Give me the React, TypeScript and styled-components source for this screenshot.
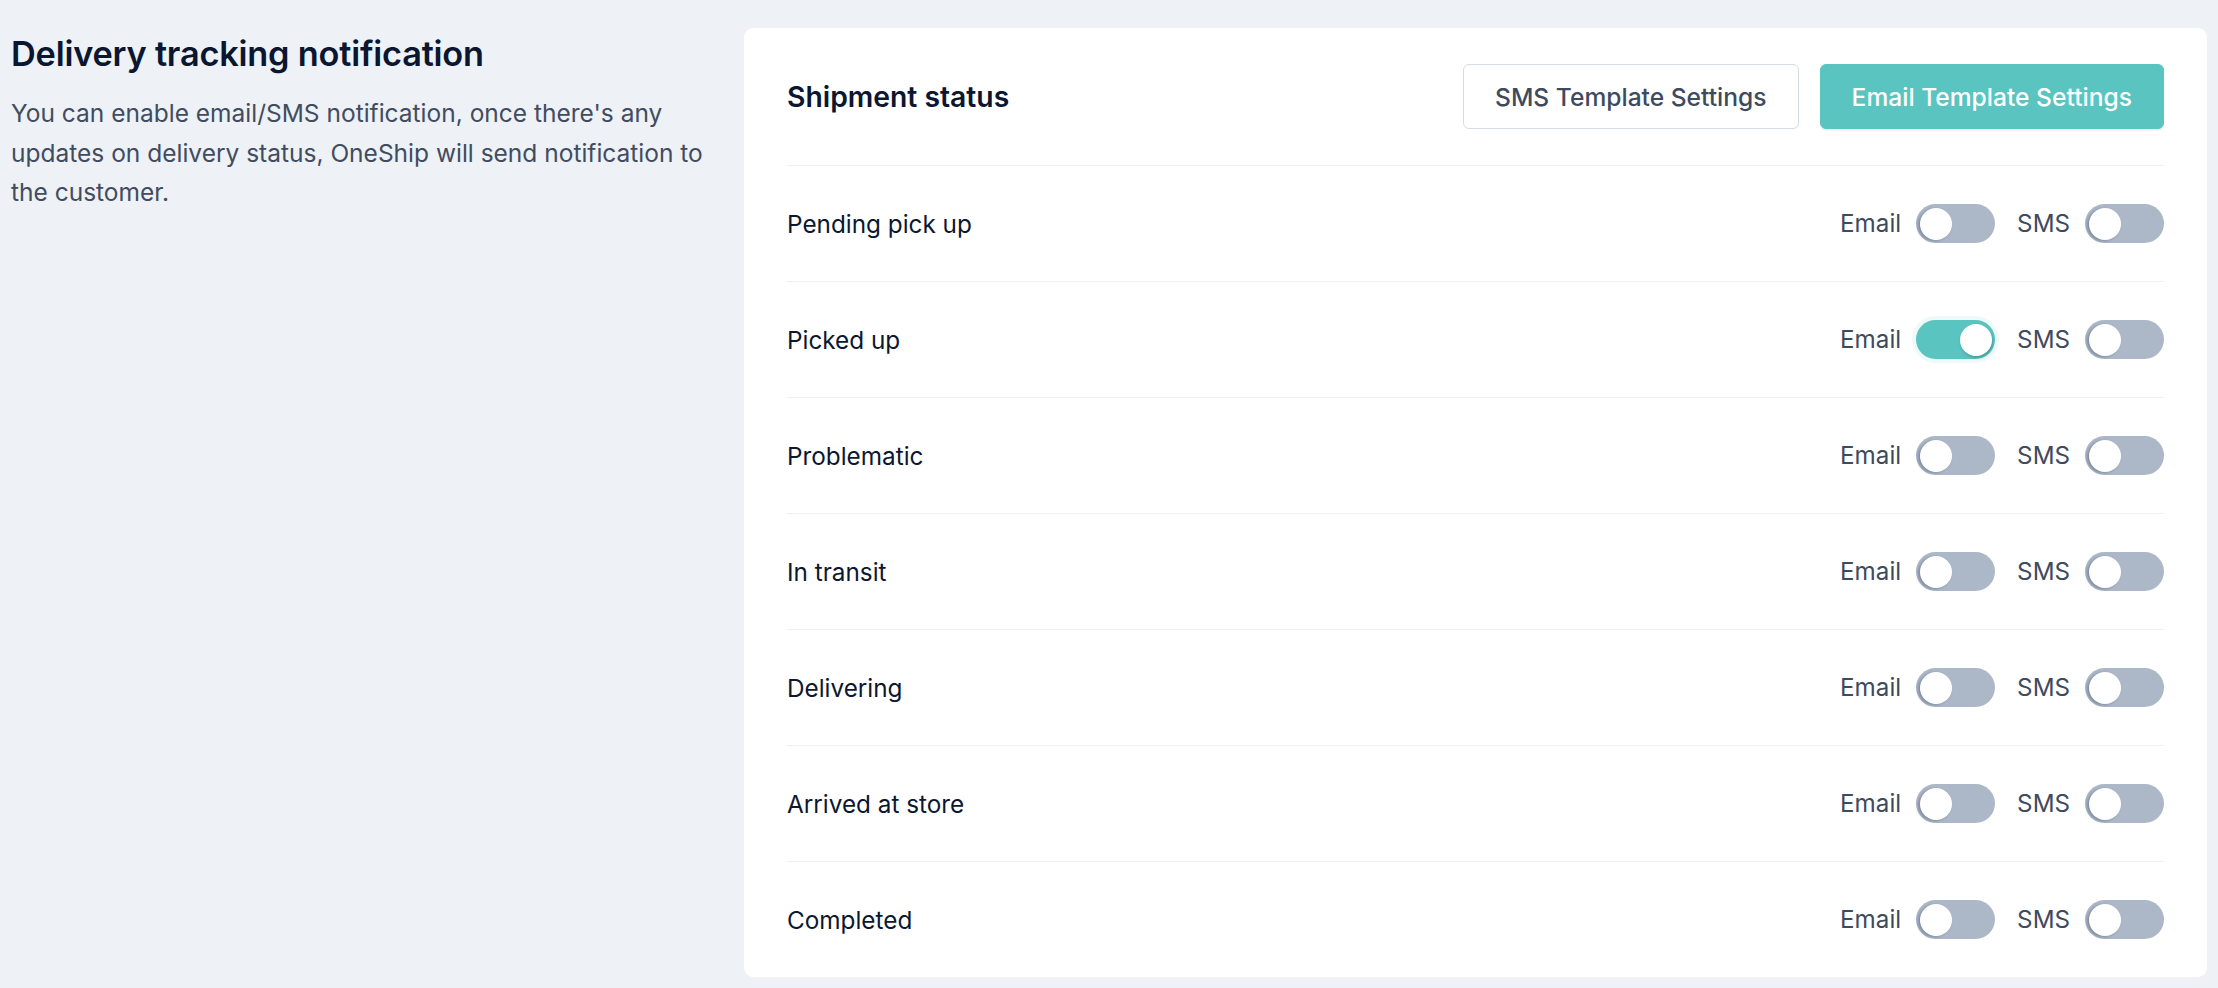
import React, { useState } from "react";
import styled, { createGlobalStyle } from "styled-components";

const GlobalStyle = createGlobalStyle`
  html, body { margin: 0; padding: 0; }
  body {
    background: #eef1f6;
    font-family: Inter, "Noto Sans", "Liberation Sans", sans-serif;
    -webkit-font-smoothing: antialiased;
  }
  * { box-sizing: border-box; }
`;

const Page = styled.div`
  display: grid;
  grid-template-columns: 733px 1fr;
  padding: 28px 11px 12px;
  min-height: 988px;
  align-items: start;
`;

const Intro = styled.section`
  padding: 5px 22px 0 0;
`;

const Title = styled.h1`
  margin: 0 0 20px;
  font-size: 34.3px;
  line-height: 1.2;
  font-weight: 600;
  color: #0b1630;
  letter-spacing: -0.2px;
`;

const Description = styled.p`
  margin: 0;
  font-size: 24.5px;
  line-height: 39.6px;
  color: #414c60;
`;

const Card = styled.section`
  background: #ffffff;
  border-radius: 9px;
  padding: 0 43px;
`;

const CardHeader = styled.header`
  display: flex;
  align-items: center;
  justify-content: space-between;
  height: 137px;
`;

const CardTitle = styled.h2`
  margin: 0;
  font-size: 28.3px;
  font-weight: 600;
  color: #0b1630;
`;

const Actions = styled.div`
  display: flex;
  gap: 21px;
`;

const Button = styled.button<{ $primary?: boolean }>`
  height: 65px;
  padding: 0 31px;
  border-radius: 6px;
  font-family: inherit;
  font-size: 24.6px;
  font-weight: 500;
  cursor: pointer;
  border: 1.4px solid ${(p) => (p.$primary ? "#5ac4c1" : "#d3dce7")};
  background: ${(p) => (p.$primary ? "#5ac4c1" : "#ffffff")};
  color: ${(p) => (p.$primary ? "#ffffff" : "#3e4a5e")};
  box-shadow: ${(p) => (p.$primary ? "0 2px 2px rgba(15, 23, 42, 0.06)" : "none")};
`;

const Row = styled.div`
  display: flex;
  align-items: center;
  justify-content: space-between;
  height: 116px;
  border-top: 1.4px solid #edf0f4;
`;

const RowLabel = styled.span`
  font-size: 24.3px;
  color: #0c1730;
`;

const Controls = styled.div`
  display: flex;
  align-items: center;
  gap: 22px;
`;

const ToggleGroup = styled.label`
  display: flex;
  align-items: center;
  gap: 15px;
  font-size: 24.2px;
  color: #3e4a5e;
  cursor: pointer;
`;

const Track = styled.button<{ $on: boolean }>`
  position: relative;
  width: 79px;
  height: 39px;
  padding: 0;
  border: none;
  border-radius: 20px;
  cursor: pointer;
  background: ${(p) => (p.$on ? "#5ac4c1" : "#acb8c8")};
  box-shadow: ${(p) => (p.$on ? "0 0 0 4px rgba(90, 196, 193, 0.1)" : "none")};
`;

const Knob = styled.span<{ $on: boolean }>`
  position: absolute;
  top: 3.5px;
  left: ${(p) => (p.$on ? "43.5px" : "3.5px")};
  width: 32px;
  height: 32px;
  border-radius: 50%;
  background: #ffffff;
  box-shadow: ${(p) =>
    p.$on
      ? "1px 2px 3px rgba(30, 90, 88, 0.35)"
      : "-2px 1px 3px rgba(70, 85, 110, 0.45)"};
`;

type Status = { name: string; email: boolean; sms: boolean };

const initial: Status[] = [
  { name: "Pending pick up", email: false, sms: false },
  { name: "Picked up", email: true, sms: false },
  { name: "Problematic", email: false, sms: false },
  { name: "In transit", email: false, sms: false },
  { name: "Delivering", email: false, sms: false },
  { name: "Arrived at store", email: false, sms: false },
  { name: "Completed", email: false, sms: false },
];

const Toggle: React.FC<{ label: string; on: boolean; onChange: () => void }> = ({
  label,
  on,
  onChange,
}) => (
  <ToggleGroup>
    <span>{label}</span>
    <Track type="button" role="switch" aria-checked={on} $on={on} onClick={onChange}>
      <Knob $on={on} />
    </Track>
  </ToggleGroup>
);

export default function App() {
  const [rows, setRows] = useState<Status[]>(initial);
  const flip = (i: number, key: "email" | "sms") =>
    setRows((r) => r.map((row, j) => (j === i ? { ...row, [key]: !row[key] } : row)));

  return (
    <>
      <GlobalStyle />
      <Page>
        <Intro>
          <Title>Delivery tracking notification</Title>
          <Description>
            You can enable email/SMS notification, once there's any updates on delivery status,
            OneShip will send notification to the customer.
          </Description>
        </Intro>
        <Card>
          <CardHeader>
            <CardTitle>Shipment status</CardTitle>
            <Actions>
              <Button type="button">SMS Template Settings</Button>
              <Button type="button" $primary>
                Email Template Settings
              </Button>
            </Actions>
          </CardHeader>
          {rows.map((row, i) => (
            <Row key={row.name}>
              <RowLabel>{row.name}</RowLabel>
              <Controls>
                <Toggle label="Email" on={row.email} onChange={() => flip(i, "email")} />
                <Toggle label="SMS" on={row.sms} onChange={() => flip(i, "sms")} />
              </Controls>
            </Row>
          ))}
        </Card>
      </Page>
    </>
  );
}
